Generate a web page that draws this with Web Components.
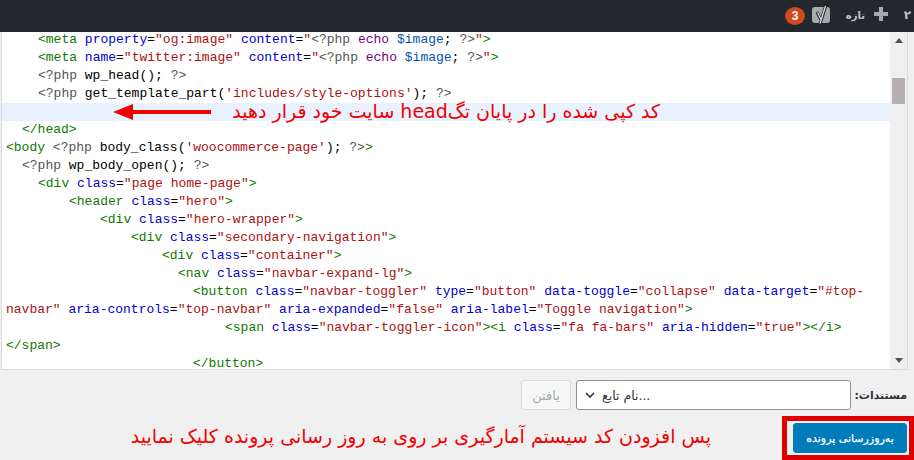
<!DOCTYPE html>
<html lang="fa">
<head>
<meta charset="utf-8">
<title>ویرایشگر پرونده</title>
<style>
  html, body { margin: 0; padding: 0; }
  body { width: 914px; height: 460px; overflow: hidden; background: #f0f0f1; }
</style>
</head>
<body>

<editor-page>
  <admin-bar slot="bar"></admin-bar>

  <code-editor slot="editor">
    <code-line indent="38"><i class="t">&lt;meta</i> <i class="a">property</i>=<i class="s">"og:image"</i> <i class="a">content</i>=<i class="s">"</i><i class="m">&lt;?php</i> <i class="k">echo</i> <i class="v">$image</i>; <i class="m">?&gt;</i><i class="s">"</i><i class="t">&gt;</i></code-line>
    <code-line indent="38"><i class="t">&lt;meta</i> <i class="a">name</i>=<i class="s">"twitter:image"</i> <i class="a">content</i>=<i class="s">"</i><i class="m">&lt;?php</i> <i class="k">echo</i> <i class="v">$image</i>; <i class="m">?&gt;</i><i class="s">"</i><i class="t">&gt;</i></code-line>
    <code-line indent="38"><i class="m">&lt;?php</i> wp_head(); <i class="m">?&gt;</i></code-line>
    <code-line indent="38"><i class="m">&lt;?php</i> get_template_part(<i class="s">'includes/style-options'</i>); <i class="m">?&gt;</i></code-line>
    <code-line active><red-note>کد کپی شده را در پایان تگ‌head سایت خود قرار دهید</red-note></code-line>
    <code-line indent="22"><i class="t">&lt;/head&gt;</i></code-line>
    <code-line indent="6"><i class="t">&lt;body</i> <i class="m">&lt;?php</i> body_class(<i class="s">'woocommerce-page'</i>); <i class="m">?&gt;</i><i class="t">&gt;</i></code-line>
    <code-line indent="22"><i class="m">&lt;?php</i> wp_body_open(); <i class="m">?&gt;</i></code-line>
    <code-line indent="38"><i class="t">&lt;div</i> <i class="a">class</i>=<i class="s">"page home-page"</i><i class="t">&gt;</i></code-line>
    <code-line indent="69"><i class="t">&lt;header</i> <i class="a">class</i>=<i class="s">"hero"</i><i class="t">&gt;</i></code-line>
    <code-line indent="100"><i class="t">&lt;div</i> <i class="a">class</i>=<i class="s">"hero-wrapper"</i><i class="t">&gt;</i></code-line>
    <code-line indent="131"><i class="t">&lt;div</i> <i class="a">class</i>=<i class="s">"secondary-navigation"</i><i class="t">&gt;</i></code-line>
    <code-line indent="162"><i class="t">&lt;div</i> <i class="a">class</i>=<i class="s">"container"</i><i class="t">&gt;</i></code-line>
    <code-line indent="178"><i class="t">&lt;nav</i> <i class="a">class</i>=<i class="s">"navbar-expand-lg"</i><i class="t">&gt;</i></code-line>
    <code-line indent="193"><i class="t">&lt;button</i> <i class="a">class</i>=<i class="s">"navbar-toggler"</i> <i class="a">type</i>=<i class="s">"button"</i> <i class="a">data-toggle</i>=<i class="s">"collapse"</i> <i class="a">data-target</i>=<i class="s">"#top-</i></code-line>
    <code-line indent="6"><i class="s">navbar"</i> <i class="a">aria-controls</i>=<i class="s">"top-navbar"</i> <i class="a">aria-expanded</i>=<i class="s">"false"</i> <i class="a">aria-label</i>=<i class="s">"Toggle navigation"</i><i class="t">&gt;</i></code-line>
    <code-line indent="225"><i class="t">&lt;span</i> <i class="a">class</i>=<i class="s">"navbar-toggler-icon"</i><i class="t">&gt;&lt;i</i> <i class="a">class</i>=<i class="s">"fa fa-bars"</i> <i class="a">aria-hidden</i>=<i class="s">"true"</i><i class="t">&gt;&lt;/i&gt;</i></code-line>
    <code-line indent="6"><i class="t">&lt;/span&gt;</i></code-line>
    <code-line indent="193"><i class="t">&lt;/button&gt;</i></code-line>
  </code-editor>

  <docs-lookup slot="docs"></docs-lookup>

  <update-row slot="update">پس افزودن کد سیستم آمارگیری بر روی به روز رسانی پرونده کلیک نمایید</update-row>
</editor-page>

<script>
// صفحه اصلی
class EditorPage extends HTMLElement {
  constructor() {
    super();
    const shadow = this.attachShadow({ mode: "open" });
    shadow.innerHTML = `
      <style>
        :host { display: flex; flex-direction: column; width: 914px; height: 460px; background: #f0f0f1; }
      </style>
      <slot name="bar"></slot>
      <slot name="editor"></slot>
      <slot name="docs"></slot>
      <slot name="update"></slot>
    `;
  }
}

// نوار مدیریت بالا
class AdminBar extends HTMLElement {
  constructor() {
    super();
    const shadow = this.attachShadow({ mode: "open" });
    shadow.innerHTML = `
      <style>
        :host {
          display: flex; align-items: center; height: 32px; flex: none;
          direction: rtl; background: #23282d; color: #c3c4c7;
          font: bold 13px "DejaVu Sans", sans-serif;
        }
        .num { margin-right: 3px; width: 8px; font-size: 12px; margin-top: -2px; }
        .plus { margin-right: 15px; display: block; margin-top: -4px; }
        .new { margin-right: 9px; width: 19px; font-size: 10px; white-space: nowrap; margin-top: -2px; }
        .yoast { margin-right: 16px; display: block; margin-top: -2px; }
        .badge {
          margin-right: 7px; width: 20px; height: 18px; border-radius: 50%;
          background: #cf4a1e; color: #fff; display: flex; align-items: center; justify-content: center;
          font: bold 12px "Liberation Sans", sans-serif; margin-top: -1px;
        }
      </style>
      <span class="num">۲</span>
      <svg class="plus" width="14" height="14" viewBox="0 0 14 14"><path d="M5 0h4v5h5v4H9v5H5V9H0V5h5z" fill="#a7aaad"/></svg>
      <span class="new">تازه</span>
      <svg class="yoast" width="18" height="20" viewBox="0 0 18 20">
        <path d="M3 2h12a3 3 0 0 1 3 3v10a3 3 0 0 1-3 3H3a3 3 0 0 1-3-3V5a3 3 0 0 1 3-3z" fill="#a7aaad"/>
        <path d="M5 7l4 8M14 0L8 19" fill="none" stroke="#23282d" stroke-width="3"/>
        <path d="M5.500 7.500l3.500 7M13.500 1L8 18.500" fill="none" stroke="#dcdcde" stroke-width="1.300"/>
      </svg>
      <span class="badge">3</span>
    `;
  }
}

// جعبه ویرایشگر کد با نوار پیمایش
class CodeEditor extends HTMLElement {
  constructor() {
    super();
    const shadow = this.attachShadow({ mode: "open" });
    shadow.innerHTML = `
      <style>
        :host {
          display: flex; flex: none; height: 337px; width: 905px; margin-left: 1px;
          border: solid #dcdcde; border-width: 0 1px 1px 1px; background: #fff;
          overflow: hidden;
        }
        .lines { flex: 1; min-width: 0; margin-top: -1px; }
        .bar {
          flex: none; width: 17px; background: #f0f0f0; display: flex; flex-direction: column;
          align-items: center; justify-content: space-between; position: relative;
        }
        .thumb { position: absolute; top: 46px; left: 2px; width: 13px; height: 26px; background: #b5aeb2; }
        svg { display: block; margin: 6px 0; }
      </style>
      <div class="lines"><slot></slot></div>
      <div class="bar">
        <svg width="8" height="5" viewBox="0 0 8 5"><path d="M4 0l4 5H0z" fill="#505050"/></svg>
        <div class="thumb"></div>
        <svg width="8" height="5" viewBox="0 0 8 5"><path d="M4 5l4-5H0z" fill="#505050"/></svg>
      </div>
    `;
  }
}

// یک خط کد
class CodeLine extends HTMLElement {
  constructor() {
    super();
    const shadow = this.attachShadow({ mode: "open" });
    const indent = this.getAttribute("indent") || 0;
    shadow.innerHTML = `
      <style>
        :host {
          display: block; height: 18px; box-sizing: border-box;
          padding-left: ${indent - 2 < 0 ? 0 : indent - 2}px;
          font: 13px/18px "Liberation Mono", monospace; color: #000;
        }
        :host([active]) { background: #e8f2ff; padding-left: 0; }
        slot { white-space: pre; }
        ::slotted(i) { font-style: normal; }
        ::slotted(.t) { color: #117700; }
        ::slotted(.a) { color: #0000cc; }
        ::slotted(.s) { color: #aa1111; }
        ::slotted(.m) { color: #555555; }
        ::slotted(.k) { color: #770088; }
        ::slotted(.v) { color: #0055aa; }
      </style>
      <slot></slot>
    `;
  }
}

// فلش و توضیح قرمز روی خط فعال
class RedNote extends HTMLElement {
  constructor() {
    super();
    const shadow = this.attachShadow({ mode: "open" });
    shadow.innerHTML = `
      <style>
        :host { display: flex; align-items: center; height: 18px; padding-left: 111px; }
        svg { display: block; flex: none; margin-top: -1px; }
        .txt {
          margin: -2px 0 0 23px; width: 425px; direction: rtl; white-space: nowrap; color: #f00000;
          font: 19px/18px "DejaVu Sans", sans-serif;
        }
      </style>
      <svg width="99" height="18" viewBox="0 0 99 18"><path d="M0 9L20 1v6h78v4H20v6z" fill="#ee0000"/></svg>
      <span class="txt"><slot></slot></span>
    `;
  }
}

// ردیف مستندات
class DocsLookup extends HTMLElement {
  constructor() {
    super();
    const shadow = this.attachShadow({ mode: "open" });
    shadow.innerHTML = `
      <style>
        :host {
          display: flex; flex: none; align-items: center; direction: rtl; height: 30px;
          margin-top: 10px; padding-right: 7px; color: #2c3338;
          font: 13px "DejaVu Sans", sans-serif;
        }
        label { width: 50px; margin-left: 6px; white-space: nowrap; font-weight: bold; font-size: 11px; }
        .select {
          box-sizing: border-box; width: 275px; height: 30px; background: #fff;
          border: 1px solid #8c8f94; border-radius: 3px; direction: ltr;
          display: flex; align-items: center; padding-left: 8px; gap: 7px; font-size: 12.500px;
        }
        .select span { direction: rtl; }
        svg { display: block; }
        button {
          box-sizing: border-box; width: 50px; height: 30px; margin-right: 5px; padding: 0;
          background: #f6f7f7; border: 1px solid #dcdcde; border-radius: 3px; color: #a7aaad;
          font: 13px "DejaVu Sans", sans-serif;
        }
      </style>
      <label>مستندات:</label>
      <div class="select">
        <svg width="10" height="6" viewBox="0 0 10 6"><path d="M1 1l4 4 4-4" fill="none" stroke="#2c3338" stroke-width="1.600"/></svg>
        <span>...نام تابع</span>
      </div>
      <button disabled>یافتن</button>
    `;
  }
}

// ردیف دکمه به‌روزرسانی
class UpdateRow extends HTMLElement {
  constructor() {
    super();
    const shadow = this.attachShadow({ mode: "open" });
    shadow.innerHTML = `
      <style>
        :host {
          display: flex; flex: none; direction: rtl; height: 44px; margin-top: 6px; align-items: center;
        }
        .frame {
          box-sizing: border-box; width: 132px; height: 44px; border: 5px solid #e00000;
          padding: 2px 2px 2px 6px; flex: none;
        }
        button {
          display: block; width: 114px; height: 30px; padding: 0; background: #007cba; color: #fff;
          border: 1px solid #007cba; border-radius: 3px; font: 11px "DejaVu Sans", sans-serif;
          -webkit-text-stroke: .25px #fff; white-space: nowrap;
        }
        .note {
          margin: -5px 71px 0 0; white-space: nowrap; color: #f00000; font: 19px "DejaVu Sans", sans-serif;
        }
      </style>
      <div class="frame"><button>به‌روزرسانی پرونده</button></div>
      <span class="note"><slot></slot></span>
    `;
  }
}

customElements.define("editor-page", EditorPage);
customElements.define("admin-bar", AdminBar);
customElements.define("code-editor", CodeEditor);
customElements.define("code-line", CodeLine);
customElements.define("red-note", RedNote);
customElements.define("docs-lookup", DocsLookup);
customElements.define("update-row", UpdateRow);
</script>
</body>
</html>
